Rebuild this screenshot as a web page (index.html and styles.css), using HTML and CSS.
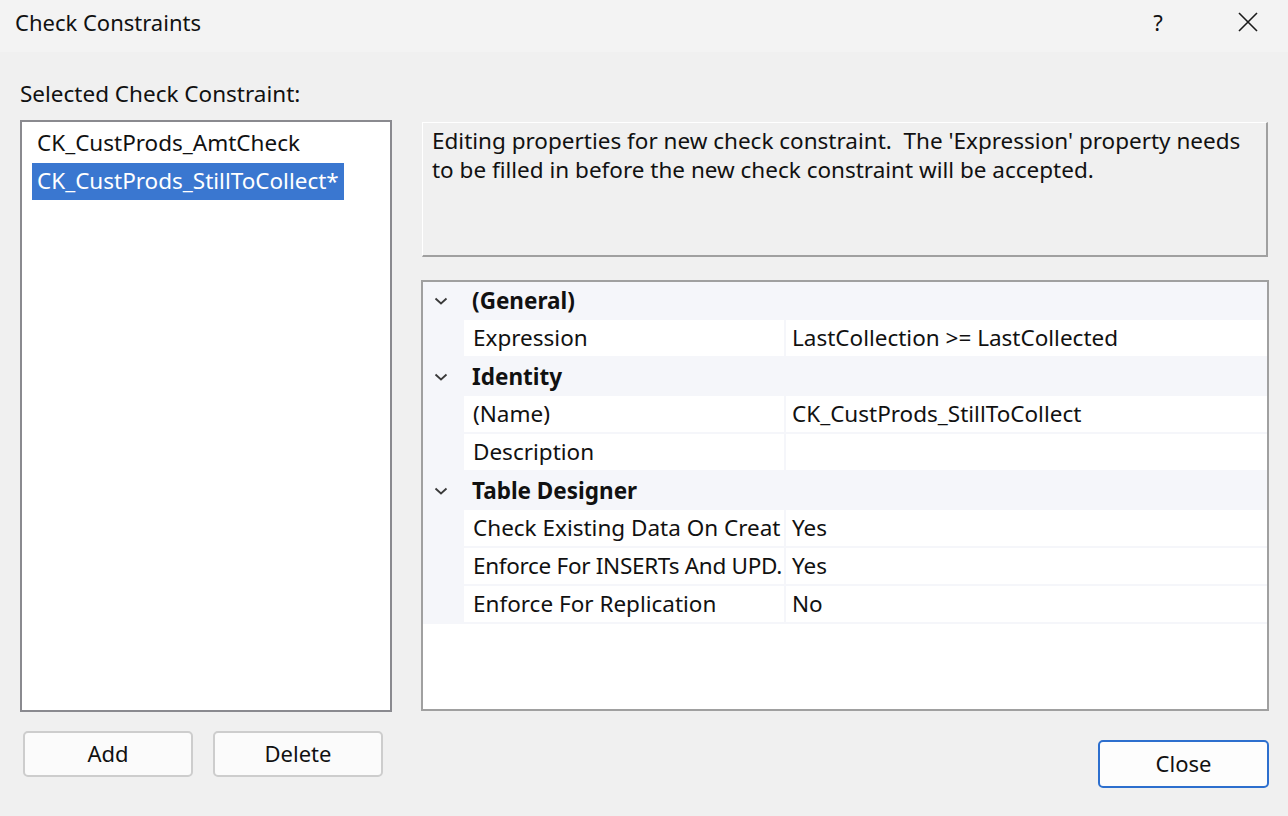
FILE: index.html
```html
<!DOCTYPE html>
<html>
<head>
<meta charset="utf-8">
<link rel="stylesheet" href="styles.css">
</head>
<body>
<div class="dialog">
  <div class="titlebar">
    <span class="title">Check Constraints</span>
    <div class="tb-buttons">
      <span class="help">?</span>
      <span class="close-x">
        <svg width="20" height="20" viewBox="0 0 20 20"><path d="M1 1 L19 19 M19 1 L1 19" stroke="#1a1a1a" stroke-width="1.6" fill="none"/></svg>
      </span>
    </div>
  </div>
  <div class="content">
    <div class="left">
      <div class="label">Selected Check Constraint:</div>
      <div class="listbox">
        <div class="item">CK_CustProds_AmtCheck</div>
        <div class="item selected">CK_CustProds_StillToCollect*</div>
      </div>
      <div class="btnrow">
        <button class="btn">Add</button>
        <button class="btn">Delete</button>
      </div>
    </div>
    <div class="right">
      <div class="desc">Editing properties for new check constraint.&nbsp; The 'Expression' property needs to be filled in before the new check constraint will be accepted.</div>
      <div class="grid">
        <div class="row cat"><span class="chev"><svg width="14" height="8" viewBox="0 0 14 8"><path d="M1.5 1.5 L7 6.5 L12.5 1.5" stroke="#3a3a3a" stroke-width="1.8" fill="none"/></svg></span><span class="cat-name">(General)</span></div>
        <div class="row prop"><span class="pname">Expression</span><span class="pval">LastCollection &gt;= LastCollected</span></div>
        <div class="row cat"><span class="chev"><svg width="14" height="8" viewBox="0 0 14 8"><path d="M1.5 1.5 L7 6.5 L12.5 1.5" stroke="#3a3a3a" stroke-width="1.8" fill="none"/></svg></span><span class="cat-name">Identity</span></div>
        <div class="row prop"><span class="pname">(Name)</span><span class="pval">CK_CustProds_StillToCollect</span></div>
        <div class="row prop"><span class="pname">Description</span><span class="pval"></span></div>
        <div class="row cat"><span class="chev"><svg width="14" height="8" viewBox="0 0 14 8"><path d="M1.5 1.5 L7 6.5 L12.5 1.5" stroke="#3a3a3a" stroke-width="1.8" fill="none"/></svg></span><span class="cat-name">Table Designer</span></div>
        <div class="row prop"><span class="pname">Check Existing Data On Creat</span><span class="pval">Yes</span></div>
        <div class="row prop"><span class="pname tight">Enforce For INSERTs And UPD.</span><span class="pval">Yes</span></div>
        <div class="row prop"><span class="pname">Enforce For Replication</span><span class="pval">No</span></div>
        <div class="grid-fill"></div>
      </div>
      <div class="closerow">
        <button class="btn primary">Close</button>
      </div>
    </div>
  </div>
</div>
</body>
</html>
```

FILE: styles.css
```css
* { box-sizing: border-box; }
html, body {
  margin: 0;
  padding: 0;
  width: 1288px;
  height: 816px;
  overflow: hidden;
  background: #f0f0f0;
  font-family: "Noto Sans", "Open Sans", sans-serif;
  font-size: 22.5px;
  color: #111;
}
.dialog { width: 1288px; height: 816px; display: flex; flex-direction: column; }
.titlebar {
  height: 52px;
  background: #f3f3f3;
  display: flex;
  align-items: center;
  justify-content: space-between;
  padding: 0 0 9px 15px;
}
.title { font-size: 22px; color: #111; }
.tb-buttons { display: flex; align-items: center; height: 100%; }
.help {
  width: 90px;
  text-align: center;
  font-size: 22px;
  padding-right: 10px;
}
.close-x { width: 80px; display: flex; justify-content: center; }
.close-x svg { display: block; }

.content { display: flex; flex: 1; padding-left: 20px; }
.left { width: 372px; display: flex; flex-direction: column; }
.label { margin-top: 29px; height: 26px; line-height: 26px; }
.listbox {
  margin-top: 13px;
  height: 592px;
  background: #fff;
  border: 2px solid #8a8a8f;
  padding: 2px 0 0 10px;
}
.item {
  height: 38px;
  line-height: 37px;
  padding-left: 5px;
  white-space: nowrap;
}
.item.selected {
  display: inline-block;
  background: #3a77d0;
  color: #fff;
  height: 37px;
  line-height: 36px;
  padding-right: 5px;
  margin-top: 1px;
}
.btnrow { display: flex; gap: 20px; margin-top: 19px; padding-left: 3px; }
.btn {
  font-family: inherit;
  font-size: 22px;
  color: #111;
  width: 170px;
  height: 46px;
  background: #fbfbfb;
  border: 2px solid #cdcdcd;
  border-radius: 5px;
  padding: 0 0 2px 0;
}
.btn.primary {
  width: 171px;
  height: 48px;
  border: 2px solid #2d6fce;
  background: #fdfdfd;
}

.right {
  margin-left: 29px;
  width: 848px;
  display: flex;
  flex-direction: column;
}
.desc {
  margin-top: 70px;
  margin-left: 1px;
  width: 846px;
  height: 135px;
  border-top: 1px solid #fff;
  border-left: 1px solid #fff;
  border-right: 2px solid #a0a0a0;
  border-bottom: 2px solid #a0a0a0;
  padding: 3px 8px 0 9px;
  line-height: 29px;
}
.grid {
  margin-top: 23px;
  height: 431px;
  border: 2px solid #a0a0a0;
  background: #fff;
  display: flex;
  flex-direction: column;
}
.row {
  height: 38px;
  flex: none;
  background: #f5f6fa;
  display: flex;
  white-space: nowrap;
}
.cat { align-items: center; }
.chev { width: 49px; display: flex; justify-content: flex-start; padding-left: 11px; }
.chev svg { display: block; margin-top: 0; }
.cat-name { font-weight: bold; padding-bottom: 2px; }
.prop { padding-left: 41px; padding-bottom: 2px; gap: 2px; }
.pname {
  width: 320px;
  background: #fff;
  padding-left: 9px;
  line-height: 35px;
  overflow: hidden;
}
.pname.tight { letter-spacing: -0.3px; }
.pval {
  flex: 1;
  background: #fff;
  padding-left: 6px;
  line-height: 35px;
}
.grid-fill { flex: 1; background: #fff; }
.closerow { display: flex; justify-content: flex-end; margin-top: 29px; }
```
